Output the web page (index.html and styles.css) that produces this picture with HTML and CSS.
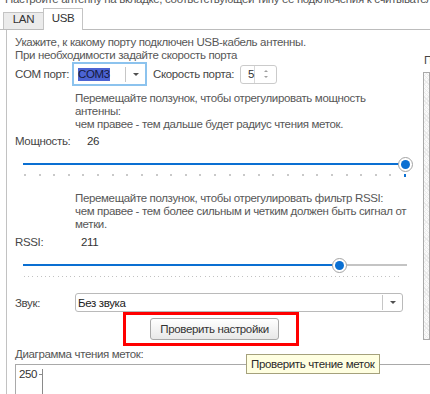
FILE: index.html
```html
<!DOCTYPE html>
<html lang="ru">
<head>
    <meta charset="UTF-8">
    <meta name="viewport" content="width=device-width, initial-scale=1.0">
    <title>Настройка антенны</title>
    <link rel="stylesheet" href="styles.css">
</head>
<body>
    <div class="top-note">Настройте антенну на вкладке, соответствующей типу ее подключения к считывателю меток</div>

    <div class="tabs">
        <div class="tab">LAN</div>
        <div class="tab active">USB</div>
    </div>

    <div class="panel">
        <div class="upper">
            <div class="settings">
                <div class="intro">
                    Укажите, к какому порту подключен USB-кабель антенны.<br>
                    При необходимости задайте скорость порта
                </div>

                <div class="row com-row">
                    <span class="label com-label">COM порт:</span>
                    <div class="combo">
                        <span class="sel">COM3</span>
                        <span class="combo-sep"></span>
                        <span class="drop"><i class="arrow"></i></span>
                    </div>
                    <span class="label speed-label">Скорость порта:</span>
                    <div class="spin">
                        <span class="spin-value">5</span>
                        <span class="spin-btns">
                            <i class="arrow up"></i>
                            <i class="arrow small"></i>
                        </span>
                    </div>
                </div>

                <div class="desc">
                    Перемещайте ползунок, чтобы отрегулировать мощность<br>
                    антенны:<br>
                    чем правее - тем дальше будет радиус чтения меток.
                </div>

                <div class="row value-row">
                    <span class="label power-label">Мощность:</span>
                    <span class="value">26</span>
                </div>

                <div class="slider" style="--v: 1">
                    <div class="track"><div class="fill"></div></div>
                    <div class="ticks wide"></div>
                    <div class="mark"></div>
                    <div class="thumb"></div>
                </div>

                <div class="desc">
                    Перемещайте ползунок, чтобы отрегулировать фильтр RSSI:<br>
                    чем правее - тем более сильным и четким должен быть сигнал от<br>
                    метки.
                </div>

                <div class="row value-row rssi-row">
                    <span class="label rssi-label">RSSI:</span>
                    <span class="value">211</span>
                </div>

                <div class="slider rssi" style="--v: 0.8275">
                    <div class="track"><div class="fill"></div></div>
                    <div class="ticks fine"></div>
                    <div class="thumb"></div>
                </div>

                <div class="row sound-row">
                    <span class="label sound-label">Звук:</span>
                    <div class="select">
                        <span class="select-text">Без звука</span>
                        <span class="combo-sep"></span>
                        <span class="drop"><i class="arrow"></i></span>
                    </div>
                </div>

                <div class="highlight">
                    <button type="button" class="btn">Проверить настройки</button>
                </div>
            </div>

            <div class="side">
                <div class="side-title">Прочитанные метки:</div>
                <div class="side-box"></div>
            </div>
        </div>

        <div class="chart-title">Диаграмма чтения меток:</div>
        <div class="chart">
            <span class="scale">250</span>
            <div class="axis">
                <span class="tick"></span>
                <span class="axis-line"></span>
            </div>
        </div>
    </div>

    <div class="tooltip">Проверить чтение меток</div>
</body>
</html>
```

FILE: styles.css
```css
* {
    box-sizing: border-box;
}
body {
    margin: 0;
    width: 430px;
    height: 394px;
    overflow: hidden;
    position: relative;
    background: #fff;
    font-family: "Liberation Sans", Arial, sans-serif;
    font-size: 11.5px;
    letter-spacing: -0.35px;
    color: #464646;
}
.top-note {
    margin-top: -8px;
    height: 14px;
    line-height: 14px;
    padding-left: 5px;
    white-space: nowrap;
    overflow: hidden;
    color: #555;
}

/* вкладки */
.tabs {
    display: flex;
    align-items: flex-end;
    height: 24px;
    padding-left: 3px;
    border-bottom: 1px solid #bcbcbc;
}
.tab {
    width: 41px;
    height: 17px;
    line-height: 13px;
    text-align: center;
    border: 1px solid #c4c4c4;
    border-bottom: none;
    background: #ebebeb;
    color: #333;
}
.tab.active {
    width: 40px;
    height: 22px;
    margin-left: -1px;
    margin-bottom: -1px;
    padding-top: 3px;
    background: #fff;
}

.panel {
    margin-left: 6px;
    border-left: 1px solid #c2c2c2;
}
.upper {
    display: flex;
}
.settings {
    flex-shrink: 0;
    width: 416px;
    padding: 6px 0 0 8px;
}
.intro, .desc {
    line-height: 13px;
    white-space: nowrap;
    color: #575757;
}
.desc {
    margin: 6px 0 0 60px;
}
.row {
    display: flex;
    align-items: center;
}
.row > * {
    flex-shrink: 0;
}
.label {
    white-space: nowrap;
}
.value {
    color: #333;
}

/* COM порт */
.com-row {
    height: 24px;
}
.com-label {
    width: 57px;
}
.combo {
    display: flex;
    align-items: center;
    width: 75px;
    height: 24px;
    padding-left: 4px;
    border: 2px solid #8cc3ee;
}
.sel {
    line-height: 13px;
    background: #4c63d2;
    color: #151a3d;
}
.combo-sep {
    margin-left: auto;
    width: 1px;
    height: 15px;
    background: #c6c6c6;
}
.drop {
    display: flex;
    justify-content: center;
    align-items: center;
    width: 19px;
}
.arrow {
    width: 0;
    height: 0;
    border-left: 3px solid transparent;
    border-right: 3px solid transparent;
    border-top: 3px solid #505050;
}
.speed-label {
    width: 87px;
    margin-left: 6px;
}
.spin {
    display: flex;
    width: 37px;
    height: 19px;
    border: 1px solid #cbcbcb;
    border-radius: 3px;
}
.spin-value {
    width: 14px;
    padding-left: 7px;
    line-height: 17px;
    color: #333;
    border-right: 1px solid #d8d8d8;
}
.spin-btns {
    flex: 1;
    display: flex;
    flex-direction: column;
    justify-content: center;
    align-items: center;
    gap: 4px;
}
.spin-btns .arrow {
    border-left-width: 2px;
    border-right-width: 2px;
    border-top: 2px solid #a0a0a0;
}
.spin-btns .arrow.up {
    border-top: none;
    border-bottom: 2px solid #a0a0a0;
}

.value-row {
    height: 14px;
    margin-top: 3px;
}
.rssi-row {
    margin-top: 4px;
}
.power-label {
    width: 72px;
}
.rssi-label {
    width: 66px;
}

/* ползунки */
.slider {
    position: relative;
    width: 384px;
    height: 38px;
    margin-left: 8px;
    padding-top: 15px;
}
.track {
    height: 2px;
    background: #c4c4c4;
}
.fill {
    width: calc(var(--v) * 380px + 2px);
    height: 2px;
    background: #0a6fd2;
}
.ticks {
    margin: 9px 0 0 1px;
    width: 383px;
    height: 2px;
}
.ticks.wide {
    background-image: repeating-linear-gradient(to right, #c9c9c9 0 2px, transparent 2px 14.615px);
}
.ticks.fine {
    margin-top: 10px;
    width: 377px;
    height: 1px;
    background-image: repeating-linear-gradient(to right, #c2c2c2 0 1px, transparent 1px 4.2px);
}
.mark {
    position: absolute;
    top: 26px;
    left: calc(var(--v) * 380px + 1px);
    width: 2px;
    height: 3px;
    background: #0a6fd2;
}
.thumb {
    position: absolute;
    top: 9px;
    left: calc(var(--v) * 380px + 2px - 7.5px);
    width: 15px;
    height: 15px;
    border: 1px solid #a3a3a3;
    border-radius: 50%;
    background: #fff;
    display: flex;
    align-items: center;
    justify-content: center;
}
.thumb::after {
    content: "";
    width: 9px;
    height: 9px;
    border-radius: 50%;
    background: #0a6fd2;
}

/* звук */
.sound-row {
    margin-top: 6px;
}
.sound-label {
    width: 60px;
}
.select {
    display: flex;
    align-items: center;
    width: 328px;
    height: 19px;
    border: 1px solid #bababa;
    border-radius: 3px;
}
.select-text {
    padding-left: 2px;
    color: #222;
}

.highlight {
    width: 176px;
    margin-left: 108px;
    padding: 3px 17px 3px 24px;
    border: 3px solid #ff0000;
}
.btn {
    display: block;
    width: 129px;
    height: 22px;
    padding: 0;
    border: 1px solid #a8a8a8;
    border-radius: 3px;
    background: linear-gradient(#ffffff, #e8e8e8);
    font-family: "Liberation Sans", Arial, sans-serif;
    font-size: 11.5px;
    letter-spacing: -0.35px;
    color: #333;
}

/* правая колонка */
.side {
    flex: 1;
    min-width: 0;
    padding-top: 24px;
}
.side-title {
    line-height: 13px;
    padding-left: 1px;
    white-space: nowrap;
    overflow: hidden;
    color: #444;
}
.side-box {
    margin-top: 5px;
    height: 268px;
    border: 1px solid #a9a9a9;
    background-color: #fafafa;
    background-image:
        repeating-linear-gradient(45deg, #e9e9e9 0 1px, transparent 1px 3px),
        repeating-linear-gradient(-45deg, #efefef 0 1px, transparent 1px 3px);
}

/* диаграмма */
.chart-title {
    margin: 2px 0 0 8px;
    line-height: 13px;
    color: #555;
}
.chart {
    display: flex;
    margin: 3px 0 0 8px;
    height: 40px;
    padding: 3px 0 0 3px;
    border-top: 1px solid #a9a9a9;
    border-left: 1px solid #a9a9a9;
}
.scale {
    width: 20px;
    line-height: 13px;
    color: #333;
}
.axis {
    display: flex;
}
.tick {
    width: 3px;
    height: 1px;
    margin-top: 6px;
    background: #8a8a8a;
}
.axis-line {
    width: 1px;
    height: 40px;
    margin-top: 1px;
    background: #8a8a8a;
}

.tooltip {
    position: absolute;
    left: 246px;
    top: 354px;
    width: 134px;
    height: 20px;
    padding-left: 4px;
    line-height: 18px;
    white-space: nowrap;
    background: #ffffe1;
    border: 1px solid #a5a17c;
    color: #2a2a2a;
}
```
